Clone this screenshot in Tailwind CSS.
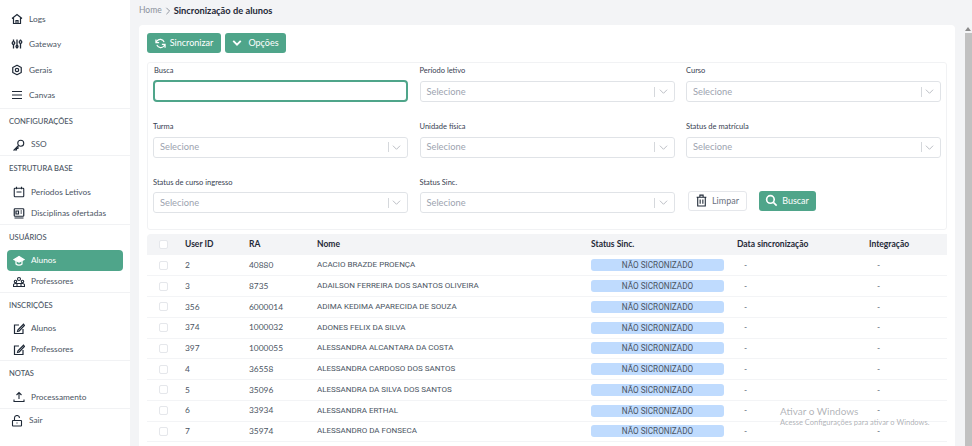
<!doctype html>
<html><head><meta charset="utf-8"><script src="https://cdn.jsdelivr.net/npm/@tailwindcss/browser@4"></script></head>
<body class="m-0">
<div class="relative flex h-[446px] w-[972px] overflow-hidden bg-[#f3f4f6] font-['Lato','Open_Sans',sans-serif] text-[9px] text-[#4b5563]">
  <aside class="w-[130px] shrink-0 whitespace-nowrap bg-white text-[8.3px]">
    <nav class="flex flex-col border-b border-[#f1f2f4] pt-[6.5px]">
      <a class="flex h-[25.3px] items-center gap-[6px] pl-[11px]"><svg class="size-[12px]" viewBox="0 0 24 24" fill="none" stroke="#1f2937" stroke-width="2.4"><path d="M2 11 12 3l10 8M5 9v12h14V9M10 21v-6h4v6"/></svg>Logs</a>
      <a class="flex h-[25.3px] items-center gap-[6px] pl-[11px]"><svg class="size-[12px]" viewBox="0 0 24 24" fill="none" stroke="#1f2937" stroke-width="2.6"><path d="M5 3v4M5 13v8M12 3v12M12 19v2M19 3v2M19 11v10"/><circle cx="5" cy="10" r="2.6"/><circle cx="12" cy="17" r="2"/><circle cx="19" cy="8" r="2.6"/></svg>Gateway</a>
      <a class="flex h-[25.3px] items-center gap-[6px] pl-[11px]"><svg class="size-[12px]" viewBox="0 0 24 24" fill="none" stroke="#1f2937" stroke-width="2.4"><circle cx="12" cy="12" r="3.4"/><path d="M12 2.5 20.5 7v10L12 21.5 3.5 17V7Z" stroke-linejoin="round"/></svg>Gerais</a>
      <a class="flex h-[25.3px] items-center gap-[6px] pl-[11px]"><svg class="size-[12px]" viewBox="0 0 24 24" fill="none" stroke="#1f2937" stroke-width="2.2"><path d="M2 5h20M2 12h20M2 19h20"/></svg>Canvas</a>
    </nav>
    <section class="border-b border-[#f1f2f4] pt-[5px]">
      <h3 class="mb-[4.5px] flex h-[16px] items-center pl-[9px] text-[7.6px] font-medium">CONFIGURAÇÕES</h3>
      <a class="flex h-[21px] items-center gap-[6px] pl-[13px]"><svg class="size-[12px]" viewBox="0 0 24 24" fill="none" stroke="#1f2937" stroke-width="2.2"><circle cx="15.5" cy="8.5" r="6"/><path d="M11 13 2 22h5v-3h3v-3l1-1"/></svg>SSO</a>
    </section>
    <section class="border-b border-[#f1f2f4] pt-[5px]">
      <h3 class="mb-[4.5px] flex h-[16px] items-center pl-[9px] text-[7.6px] font-medium">ESTRUTURA BASE</h3>
      <a class="flex h-[21px] items-center gap-[6px] pl-[13px]"><svg class="size-[12px]" viewBox="0 0 24 24" fill="none" stroke="#1f2937" stroke-width="2.2"><rect x="2.5" y="4.5" width="19" height="17" rx="1.5"/><path d="M7 1.5v5M17 1.5v5M7 12h10"/></svg>Períodos Letivos</a>
      <a class="flex h-[21px] items-center gap-[6px] pl-[13px]"><svg class="size-[12px]" viewBox="0 0 24 24" fill="none" stroke="#1f2937" stroke-width="2.4"><rect x="2.5" y="3.5" width="19" height="15" rx="1.5"/><path d="M3 22h18M15 8h3M15 12h3M6 8h5v6H6z"/></svg>Disciplinas ofertadas</a>
    </section>
    <section class="border-b border-[#f1f2f4] pt-[5px]">
      <h3 class="mb-[4.5px] flex h-[16px] items-center pl-[9px] text-[7.6px] font-medium">USUÁRIOS</h3>
      <a class="mx-[7px] flex h-[21px] items-center gap-[6px] rounded-[4px] bg-[#4fa58a] pl-[6px] text-white"><svg class="size-[12px]" viewBox="0 0 24 24" fill="none" stroke="#fff" stroke-width="2.4"><path d="M12 3 2 9l10 5 10-5Z" fill="#fff"/><path d="M6 12v6c3 3 9 3 12 0v-6"/></svg>Alunos</a>
      <a class="flex h-[21px] items-center gap-[6px] pl-[13px]"><svg class="size-[12px]" viewBox="0 0 24 24" fill="none" stroke="#1f2937" stroke-width="2.2"><circle cx="12" cy="6" r="3"/><circle cx="5" cy="11" r="2.4"/><circle cx="19" cy="11" r="2.4"/><path d="M1 21v-3c0-2 2-3 4-3h14c2 0 4 1 4 3v3ZM8 21v-5M16 21v-5"/></svg>Professores</a>
    </section>
    <section class="border-b border-[#f1f2f4] pt-[5px]">
      <h3 class="mb-[4px] flex h-[16px] items-center pl-[9px] text-[7.6px] font-medium">INSCRIÇÕES</h3>
      <a class="flex h-[21px] items-center gap-[6px] pl-[13px]"><svg class="size-[12px]" viewBox="0 0 24 24" fill="none" stroke="#1f2937" stroke-width="2.4"><path d="M12 4H3v17h17v-9"/><path d="M21 2.5 10 13.5 9 17l3.5-1L23 5Z"/></svg>Alunos</a>
      <a class="flex h-[21px] items-center gap-[6px] pl-[13px]"><svg class="size-[12px]" viewBox="0 0 24 24" fill="none" stroke="#1f2937" stroke-width="2.4"><path d="M12 4H3v17h17v-9"/><path d="M21 2.5 10 13.5 9 17l3.5-1L23 5Z"/></svg>Professores</a>
    </section>
    <section class="border-b border-[#f1f2f4] pt-[5px]">
      <h3 class="mb-[4.5px] flex h-[16px] items-center pl-[9px] text-[7.6px] font-medium">NOTAS</h3>
      <a class="flex h-[21px] items-center gap-[6px] pl-[13px]"><svg class="size-[12px]" viewBox="0 0 24 24" fill="none" stroke="#1f2937" stroke-width="2.2"><path d="M2 17v4h20v-4M12 16V3M7 8l5-5 5 5"/></svg>Processamento</a>
    </section>
    <a class="flex h-[24px] items-center gap-[6px] pl-[11px]"><svg class="size-[12px]" viewBox="0 0 24 24" fill="none" stroke="#1f2937" stroke-width="2.2"><rect x="3" y="11" width="18" height="11" rx="1"/><path d="M7 11V6a5 5 0 0 1 10 0M12 15v2"/></svg>Sair</a>
  </aside>

  <main class="flex w-[833px] shrink-0 flex-col pr-[8px] pl-[9px]">
    <div class="mb-[4px] flex h-[21px] items-center gap-[2px]">
      <span class="text-[8.5px] text-[#8b919b]">Home</span>
      <svg class="size-[8px]" viewBox="0 0 10 10" fill="none" stroke="#8b919b" stroke-width="1.2"><path d="m3 1 4 4-4 4"/></svg>
      <span class="text-[9.3px] font-bold text-[#1f2937]">Sincronização de alunos</span>
    </div>
    <div class="flex-1 overflow-hidden rounded-t-[4px] bg-white pt-[8px] pl-[8px]">
      <div class="flex gap-[4px]">
        <button class="flex h-[20px] w-[74px] items-center justify-center gap-[4px] rounded-[3px] bg-[#4fa58a] text-[9px] text-white"><svg class="size-[11px]" viewBox="0 0 24 24" fill="none" stroke="#fff" stroke-width="2.6"><path d="M20 9a9 9 0 0 0-16-2L2 10M2 3v7h7M4 15a9 9 0 0 0 16 2l2-3M22 21v-7h-7"/></svg>Sincronizar</button>
        <button class="flex h-[20px] w-[61px] items-center justify-center gap-[6px] rounded-[3px] bg-[#4fa58a] text-[9px] text-white"><svg class="size-[10px]" viewBox="0 0 24 24" fill="none" stroke="#fff" stroke-width="4.5"><path d="m3 7 9 9 9-9"/></svg>Opções</button>
      </div>

      <div class="mt-[9px] h-[168px] w-[800px] rounded-[3px] border border-[#f1f2f4] px-[5px]">
        <div class="grid grid-cols-[255px_255px_255px] gap-x-[11.5px] text-[9.3px]">
          <div class="h-[55.7px]">
            <label class="mb-[1px] flex h-[16px] items-center pl-px text-[7.5px] text-[#374151]">Busca</label>
            <div class="h-[22px] rounded-[4px] border-2 border-[#4fa58a] bg-white"></div>
          </div>
          <div class="h-[55.7px]">
            <label class="mb-[2px] flex h-[16px] items-center text-[7.5px] text-[#374151]">Período letivo</label>
            <div class="flex h-[21px] items-center rounded-[3px] border border-[#e0e3e7] pl-[6px] pr-[6px] text-[#9ca3af]"><span class="flex-1">Selecione</span><span class="h-[10px] w-px bg-[#d5d8dc]"></span><svg class="ml-[3.5px] size-[9px]" viewBox="0 0 10 10" fill="none" stroke="#b4b8be"><path d="m1 3 4 4 4-4"/></svg></div>
          </div>
          <div class="h-[55.7px]">
            <label class="mb-[2px] flex h-[16px] items-center text-[7.5px] text-[#374151]">Curso</label>
            <div class="flex h-[21px] items-center rounded-[3px] border border-[#e0e3e7] pl-[6px] pr-[6px] text-[#9ca3af]"><span class="flex-1">Selecione</span><span class="h-[10px] w-px bg-[#d5d8dc]"></span><svg class="ml-[3.5px] size-[9px]" viewBox="0 0 10 10" fill="none" stroke="#b4b8be"><path d="m1 3 4 4 4-4"/></svg></div>
          </div>
          <div class="h-[55.7px]">
            <label class="mb-[2px] flex h-[16px] items-center text-[7.5px] text-[#374151]">Turma</label>
            <div class="flex h-[21px] items-center rounded-[3px] border border-[#e0e3e7] pl-[6px] pr-[6px] text-[#9ca3af]"><span class="flex-1">Selecione</span><span class="h-[10px] w-px bg-[#d5d8dc]"></span><svg class="ml-[3.5px] size-[9px]" viewBox="0 0 10 10" fill="none" stroke="#b4b8be"><path d="m1 3 4 4 4-4"/></svg></div>
          </div>
          <div class="h-[55.7px]">
            <label class="mb-[2px] flex h-[16px] items-center text-[7.5px] text-[#374151]">Unidade física</label>
            <div class="flex h-[21px] items-center rounded-[3px] border border-[#e0e3e7] pl-[6px] pr-[6px] text-[#9ca3af]"><span class="flex-1">Selecione</span><span class="h-[10px] w-px bg-[#d5d8dc]"></span><svg class="ml-[3.5px] size-[9px]" viewBox="0 0 10 10" fill="none" stroke="#b4b8be"><path d="m1 3 4 4 4-4"/></svg></div>
          </div>
          <div class="h-[55.7px]">
            <label class="mb-[2px] flex h-[16px] items-center text-[7.5px] text-[#374151]">Status de matrícula</label>
            <div class="flex h-[21px] items-center rounded-[3px] border border-[#e0e3e7] pl-[6px] pr-[6px] text-[#9ca3af]"><span class="flex-1">Selecione</span><span class="h-[10px] w-px bg-[#d5d8dc]"></span><svg class="ml-[3.5px] size-[9px]" viewBox="0 0 10 10" fill="none" stroke="#b4b8be"><path d="m1 3 4 4 4-4"/></svg></div>
          </div>
          <div>
            <label class="mb-[2px] flex h-[16px] items-center text-[7.5px] text-[#374151]">Status de curso ingresso</label>
            <div class="flex h-[21px] items-center rounded-[3px] border border-[#e0e3e7] pl-[6px] pr-[6px] text-[#9ca3af]"><span class="flex-1">Selecione</span><span class="h-[10px] w-px bg-[#d5d8dc]"></span><svg class="ml-[3.5px] size-[9px]" viewBox="0 0 10 10" fill="none" stroke="#b4b8be"><path d="m1 3 4 4 4-4"/></svg></div>
          </div>
          <div>
            <label class="mb-[2px] flex h-[16px] items-center text-[7.5px] text-[#374151]">Status Sinc.</label>
            <div class="flex h-[21px] items-center rounded-[3px] border border-[#e0e3e7] pl-[6px] pr-[6px] text-[#9ca3af]"><span class="flex-1">Selecione</span><span class="h-[10px] w-px bg-[#d5d8dc]"></span><svg class="ml-[3.5px] size-[9px]" viewBox="0 0 10 10" fill="none" stroke="#b4b8be"><path d="m1 3 4 4 4-4"/></svg></div>
          </div>
          <div class="flex items-start gap-[12px] pt-[16.5px] pl-[1.5px]">
            <button class="flex h-[20px] w-[59px] items-center justify-center gap-[4px] rounded-[3px] border border-[#e5e7eb] text-[9px] text-[#6b7280]"><svg class="size-[13px]" viewBox="0 0 24 24" fill="none" stroke="#1f2937" stroke-width="2"><path d="M3 6h18M9 6V2h6v4M5 6v16h14V6M9.5 10v8M14.5 10v8"/></svg>Limpar</button>
            <button class="flex h-[20px] w-[57px] items-center justify-center gap-[4px] rounded-[3px] bg-[#4fa58a] text-[9px] text-white"><svg class="size-[13px]" viewBox="0 0 24 24" fill="none" stroke="#fff" stroke-width="3"><circle cx="10" cy="10" r="7"/><path d="m15.5 15.5 6 6"/></svg>Buscar</button>
          </div>
        </div>
      </div>

      <table class="mt-[4px] w-[800px] table-fixed border-collapse text-[8.4px]">
        <colgroup><col class="w-[38px]"><col class="w-[64px]"><col class="w-[68px]"><col class="w-[274px]"><col class="w-[146px]"><col class="w-[132px]"><col class="w-[78px]"></colgroup>
        <thead><tr class="h-[21px] bg-[#f3f4f6] text-left text-[8.5px] font-bold text-[#1f2937]">
          <th class="rounded-tl-[4px] pl-[12px]"><span class="block size-[9px] rounded-[2px] border border-[#e5e7eb] bg-white"></span></th>
          <th>User ID</th><th>RA</th><th>Nome</th><th>Status Sinc.</th><th>Data sincronização</th><th>Integração</th>
        </tr></thead>
        <tbody>
          <tr class="h-[20.75px] border-b border-[#f3f4f6]"><td class="pl-[12px]"><span class="block size-[9px] rounded-[2px] border border-[#e5e7eb]"></span></td><td>2</td><td>40880</td><td class="font-['Roboto'] text-[8px]">ACACIO BRAZDE PROENÇA</td><td><span class="block h-[12px] w-[133px] rounded-[3px] bg-[#bfdbfe] text-center font-['Roboto'] text-[8.2px] leading-[12px]">NÃO SICRONIZADO</span></td><td class="pl-[7px]">-</td><td class="pl-[8px]">-</td><td></td></tr>
          <tr class="h-[20.75px] border-b border-[#f3f4f6]"><td class="pl-[12px]"><span class="block size-[9px] rounded-[2px] border border-[#e5e7eb]"></span></td><td>3</td><td>8735</td><td class="font-['Roboto'] text-[8px]">ADAILSON FERREIRA DOS SANTOS OLIVEIRA</td><td><span class="block h-[12px] w-[133px] rounded-[3px] bg-[#bfdbfe] text-center font-['Roboto'] text-[8.2px] leading-[12px]">NÃO SICRONIZADO</span></td><td class="pl-[7px]">-</td><td class="pl-[8px]">-</td><td></td></tr>
          <tr class="h-[20.75px] border-b border-[#f3f4f6]"><td class="pl-[12px]"><span class="block size-[9px] rounded-[2px] border border-[#e5e7eb]"></span></td><td>356</td><td>6000014</td><td class="font-['Roboto'] text-[8px]">ADIMA KEDIMA APARECIDA DE SOUZA</td><td><span class="block h-[12px] w-[133px] rounded-[3px] bg-[#bfdbfe] text-center font-['Roboto'] text-[8.2px] leading-[12px]">NÃO SICRONIZADO</span></td><td class="pl-[7px]">-</td><td class="pl-[8px]">-</td><td></td></tr>
          <tr class="h-[20.75px] border-b border-[#f3f4f6]"><td class="pl-[12px]"><span class="block size-[9px] rounded-[2px] border border-[#e5e7eb]"></span></td><td>374</td><td>1000032</td><td class="font-['Roboto'] text-[8px]">ADONES FELIX DA SILVA</td><td><span class="block h-[12px] w-[133px] rounded-[3px] bg-[#bfdbfe] text-center font-['Roboto'] text-[8.2px] leading-[12px]">NÃO SICRONIZADO</span></td><td class="pl-[7px]">-</td><td class="pl-[8px]">-</td><td></td></tr>
          <tr class="h-[20.75px] border-b border-[#f3f4f6]"><td class="pl-[12px]"><span class="block size-[9px] rounded-[2px] border border-[#e5e7eb]"></span></td><td>397</td><td>1000055</td><td class="font-['Roboto'] text-[8px]">ALESSANDRA ALCANTARA DA COSTA</td><td><span class="block h-[12px] w-[133px] rounded-[3px] bg-[#bfdbfe] text-center font-['Roboto'] text-[8.2px] leading-[12px]">NÃO SICRONIZADO</span></td><td class="pl-[7px]">-</td><td class="pl-[8px]">-</td><td></td></tr>
          <tr class="h-[20.75px] border-b border-[#f3f4f6]"><td class="pl-[12px]"><span class="block size-[9px] rounded-[2px] border border-[#e5e7eb]"></span></td><td>4</td><td>36558</td><td class="font-['Roboto'] text-[8px]">ALESSANDRA CARDOSO DOS SANTOS</td><td><span class="block h-[12px] w-[133px] rounded-[3px] bg-[#bfdbfe] text-center font-['Roboto'] text-[8.2px] leading-[12px]">NÃO SICRONIZADO</span></td><td class="pl-[7px]">-</td><td class="pl-[8px]">-</td><td></td></tr>
          <tr class="h-[20.75px] border-b border-[#f3f4f6]"><td class="pl-[12px]"><span class="block size-[9px] rounded-[2px] border border-[#e5e7eb]"></span></td><td>5</td><td>35096</td><td class="font-['Roboto'] text-[8px]">ALESSANDRA DA SILVA DOS SANTOS</td><td><span class="block h-[12px] w-[133px] rounded-[3px] bg-[#bfdbfe] text-center font-['Roboto'] text-[8.2px] leading-[12px]">NÃO SICRONIZADO</span></td><td class="pl-[7px]">-</td><td class="pl-[8px]">-</td><td></td></tr>
          <tr class="h-[20.75px] border-b border-[#f3f4f6]"><td class="pl-[12px]"><span class="block size-[9px] rounded-[2px] border border-[#e5e7eb]"></span></td><td>6</td><td>33934</td><td class="font-['Roboto'] text-[8px]">ALESSANDRA ERTHAL</td><td><span class="block h-[12px] w-[133px] rounded-[3px] bg-[#bfdbfe] text-center font-['Roboto'] text-[8.2px] leading-[12px]">NÃO SICRONIZADO</span></td><td class="pl-[7px]">-</td><td class="pl-[8px]">-</td><td></td></tr>
          <tr class="h-[20.75px] border-b border-[#f3f4f6]"><td class="pl-[12px]"><span class="block size-[9px] rounded-[2px] border border-[#e5e7eb]"></span></td><td>7</td><td>35974</td><td class="font-['Roboto'] text-[8px]">ALESSANDRO DA FONSECA</td><td><span class="block h-[12px] w-[133px] rounded-[3px] bg-[#bfdbfe] text-center font-['Roboto'] text-[8.2px] leading-[12px]">NÃO SICRONIZADO</span></td><td class="pl-[7px]">-</td><td class="pl-[8px]">-</td><td></td></tr>
        </tbody>
      </table>
    </div>
  </main>
  <div class="flex w-[9px] shrink-0 flex-col items-end"><div class="mt-[27px] mr-[1px] h-0 w-0 border-x-[3px] border-b-[4px] border-x-transparent border-b-[#8b8b8b]"></div><div class="mt-[2px] h-[413px] w-[7px] bg-[#c1c1c1]"></div></div>

  <div class="pointer-events-none absolute left-[780px] top-[404px] text-[#8f9399]/70">
    <div class="text-[10px] leading-[14px]">Ativar o Windows</div>
    <div class="text-[7.5px] leading-[10px]">Acesse Configurações para ativar o Windows.</div>
  </div>
</div>
</body></html>
